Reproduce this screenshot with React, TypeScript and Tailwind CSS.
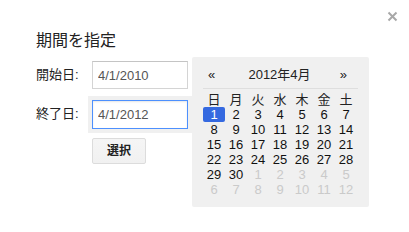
import React from "react";

const days: { d: number; cur: boolean }[] = [];
for (let i = 1; i <= 30; i++) days.push({ d: i, cur: true });
for (let i = 1; i <= 12; i++) days.push({ d: i, cur: false });

const weekdays = ["日", "月", "火", "水", "木", "金", "土"];

export default function App() {
  return (
    <div className="relative w-[409px] h-[232px] bg-white overflow-hidden font-['Liberation_Sans','Noto_Sans_CJK_JP',sans-serif] text-[#222]">
      <button className="absolute right-[11px] top-[10px] w-[12px] h-[12px] flex items-center justify-center" aria-label="close">
        <svg width="11" height="11" viewBox="0 0 11 11">
          <path d="M1.5 1.5 L9.5 9.5 M9.5 1.5 L1.5 9.5" stroke="#a8a8a8" strokeWidth="2" fill="none" />
        </svg>
      </button>
      <div className="pl-[36px] pt-[31px]">
        <h1 className="text-[16px] leading-[20px] h-[20px] font-normal">期間を指定</h1>
        <div className="flex mt-[6px]">
          <div className="flex flex-col w-[156px]">
            <div className="flex items-center h-[36px]">
              <label className="w-[52px] text-[13px] leading-[16px]">開始日:</label>
              <div className="p-[4px] w-[104px]">
                <input
                  readOnly
                  value="4/1/2010"
                  className="block w-[96px] h-[28px] px-[5px] text-[13px] text-[#555] bg-white border border-[#d4d4d4] border-t-[#c4c4c4] outline-none font-['Liberation_Sans',sans-serif]"
                />
              </div>
            </div>
            <div className="flex items-center h-[36px] mt-[3px]">
              <label className="w-[52px] text-[13px] leading-[16px]">終了日:</label>
              <div className="p-[4px] w-[104px] bg-[#f0f0f0]">
                <input
                  readOnly
                  value="4/1/2012"
                  className="block w-[96px] h-[29px] px-[5px] text-[13px] text-[#555] bg-white border border-[#4d90fe] outline-none shadow-[inset_0_1px_2px_rgba(0,0,0,0.1)] font-['Liberation_Sans',sans-serif]"
                />
              </div>
            </div>
            <div className="mt-[6px] ml-[56px]">
              <button className="w-[54px] h-[26px] rounded-[2px] border border-[#dcdcdc] bg-gradient-to-b from-[#f5f5f5] to-[#f1f1f1] text-[12px] font-bold text-[#222] flex items-center justify-center">
                選択
              </button>
            </div>
          </div>
          <div className="w-[177px] h-[150px] bg-[#f0f0f0] rounded-[2px] px-[11px] pt-[9px]">
            <div className="flex items-center justify-between h-[18px] text-[13px] w-[154px]">
              <span className="pl-[5px]">«</span>
              <span className="pl-[4px]">2012年4月</span>
              <span className="pr-[10px]">»</span>
            </div>
            <div className="mt-[4px] h-px w-[155px] bg-[#dedede]" />
            <div className="grid grid-cols-7 w-[154px] mt-[4px]">
              {weekdays.map((w) => (
                <div key={w} className="h-[14px] leading-[14px] text-[13px] text-center">
                  {w}
                </div>
              ))}
              {days.map((x, i) => (
                <div
                  key={i}
                  className={
                    "h-[15px] leading-[15px] text-[13px] text-center " +
                    (i === 0
                      ? "bg-[#3569e0] text-white rounded-[2px]"
                      : x.cur
                      ? "text-[#111]"
                      : "text-[#cacaca]")
                  }
                >
                  {x.d}
                </div>
              ))}
            </div>
          </div>
        </div>
      </div>
    </div>
  );
}
